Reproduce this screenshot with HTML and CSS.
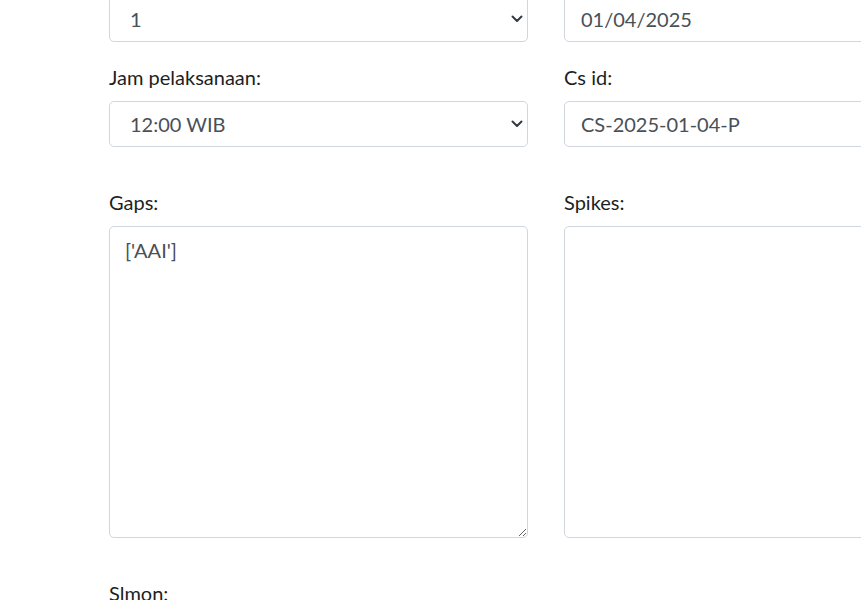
FILE: index.html
```html
<!DOCTYPE html>
<html lang="id">
<head>
<meta charset="utf-8">
<title>Form</title>
<link rel="stylesheet" href="styles.css">
</head>
<body>
<form class="form">
  <div class="row">
    <div class="field">
      <div class="select-wrap">
        <select class="control select"><option>1</option></select>
        <svg class="chev" width="12" height="8" viewBox="0 0 12 8"><path d="M1.5 1.5 L6 6 L10.5 1.5" fill="none" stroke="#343a40" stroke-width="2" stroke-linecap="round" stroke-linejoin="round"/></svg>
      </div>
    </div>
    <div class="field">
      <input class="control" type="text" value="01/04/2025">
    </div>
  </div>
  <div class="row">
    <div class="field">
      <label class="label">Jam pelaksanaan:</label>
      <div class="select-wrap">
        <select class="control select"><option>12:00 WIB</option></select>
        <svg class="chev" width="12" height="8" viewBox="0 0 12 8"><path d="M1.5 1.5 L6 6 L10.5 1.5" fill="none" stroke="#343a40" stroke-width="2" stroke-linecap="round" stroke-linejoin="round"/></svg>
      </div>
    </div>
    <div class="field">
      <label class="label">Cs id:</label>
      <input class="control" type="text" value="CS-2025-01-04-P">
    </div>
  </div>
  <div class="row row-spaced">
    <div class="field">
      <label class="label">Gaps:</label>
      <textarea class="control area">['AAI']</textarea>
    </div>
    <div class="field">
      <label class="label">Spikes:</label>
      <textarea class="control area"></textarea>
    </div>
  </div>
  <div class="row row-spaced">
    <div class="field">
      <label class="label">Slmon:</label>
    </div>
  </div>
</form>
</body>
</html>
```
FILE: styles.css
```css
html, body {
  margin: 0;
  padding: 0;
  background: #ffffff;
  overflow: hidden;
}
body {
  font-family: Lato, "Noto Sans", sans-serif;
  font-size: 20px;
  line-height: 30px;
  color: #1c1f23;
}
.form {
  margin-top: -4px;
  padding-left: 109px;
  display: flex;
  flex-direction: column;
  gap: 20px;
}
.row {
  display: grid;
  grid-template-columns: 419px 419px;
  column-gap: 36px;
}
.row-spaced {
  padding-top: 20px;
}
.field {
  display: flex;
  flex-direction: column;
}
.label {
  display: block;
  margin-bottom: 9px;
  height: 30px;
}
.control {
  box-sizing: border-box;
  width: 100%;
  height: 46px;
  margin: 0;
  padding: 0 16px;
  border: 1px solid #cfd6de;
  border-radius: 5px;
  background: #ffffff;
  font-family: inherit;
  font-size: 20px;
  color: #495057;
  outline: none;
}
.select-wrap {
  position: relative;
}
.select {
  appearance: none;
  -webkit-appearance: none;
  padding-left: 20px;
}
.chev {
  position: absolute;
  right: 5px;
  top: 19px;
  pointer-events: none;
}
.area {
  height: 312px;
  padding: 8px 15px;
  line-height: 30px;
  resize: vertical;
}
```
